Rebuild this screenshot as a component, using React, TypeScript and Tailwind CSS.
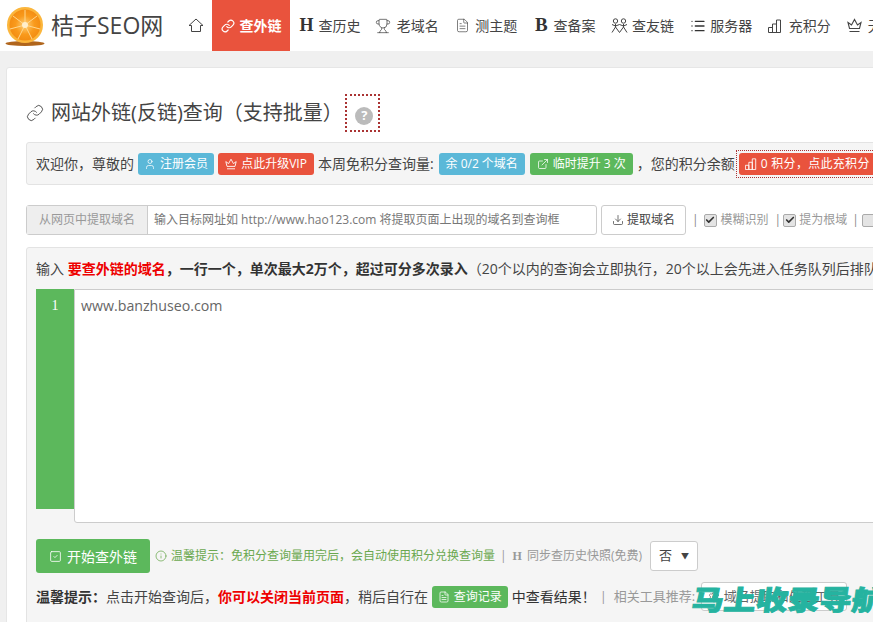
import React from "react";
import {
  Check,
  Download,
  ExternalLink,
  FileText,
  Info,
  Link,
  List,
  Settings,
  SquareCheck,
  Trophy,
  User,
} from "lucide-react";

const font = { fontFamily: '"Open Sans", "Noto Sans CJK SC", sans-serif' };

function Logo() {
  return (
    <svg width="40" height="44" viewBox="0 0 40 44" className="shrink-0">
      <defs>
        <radialGradient id="pulp" cx="0.5" cy="0.5" r="0.55">
          <stop offset="0" stopColor="#ffd27a" />
          <stop offset="0.55" stopColor="#f99a1c" />
          <stop offset="1" stopColor="#f28a10" />
        </radialGradient>
      </defs>
      <ellipse cx="20" cy="39.5" rx="19.5" ry="2.5" fill="#b0651c" />
      <circle cx="20" cy="21" r="18" fill="#fbb63c" />
      <circle cx="20" cy="21" r="15.5" fill="url(#pulp)" />
      <path d="M20 21 L8 12 M20 21 L20 6 M20 21 L32 12 M20 21 L35 25 M20 21 L27 35 M20 21 L13 35 M20 21 L5 25" stroke="#ffd78e" strokeWidth="1" />
      <circle cx="20" cy="21" r="3" fill="#ffeecb" />
    </svg>
  );
}

function HomeIcon() {
  return (
    <svg width="16" height="15" viewBox="0 0 16 15" fill="none" stroke="#444" strokeWidth="1">
      <path d="M1 7.5 L8 1 L15 7.5 H12.5 V13.5 H3.5 V7.5 H1 Z" />
    </svg>
  );
}

function CrownIcon({ size = 15, color = "#444" }: { size?: number; color?: string }) {
  return (
    <svg width={size} height={size} viewBox="0 0 15 15" fill="none" stroke={color} strokeWidth="1.1">
      <path d="M1 4.5 L4.5 7 L7.5 1.5 L10.5 7 L14 4.5 L12.5 10.5 H2.5 Z M2.5 13.5 H12.5" />
    </svg>
  );
}

function ChartIcon({ size = 14, color = "#444" }: { size?: number; color?: string }) {
  return (
    <svg width={size} height={size} viewBox="0 0 14 14" fill="none" stroke={color} strokeWidth="1">
      <path d="M0.5 13.5 V8.5 H4.5 V13.5 M4.5 13.5 V5 H8.5 V13.5 M8.5 13.5 V1 H12.5 V13.5 H0.5" />
    </svg>
  );
}

function Friends() {
  return (
    <svg width="17" height="16" viewBox="0 0 17 16" fill="none" stroke="#444" strokeWidth="1">
      <circle cx="4.5" cy="3" r="2.2" />
      <circle cx="12.5" cy="3" r="2.2" />
      <path d="M1 6.5 L4.5 8 L8.5 6.5 L12.5 8 L16 6.5 M4.5 6 V9 L1 14.5 M4.5 9 L8.5 14.5 L12.5 9 V6 M12.5 9 L16 14.5" />
    </svg>
  );
}

function NavItem({ icon, label, gap, width = "w-[78.4px]" }: { icon: React.ReactNode; label: string; gap: string; width?: string }) {
  return (
    <div className={`flex h-[51px] shrink-0 items-center justify-end pr-[8px] text-[14px] text-[#444] ${width} ${gap}`}>
      {icon}
      <span>{label}</span>
    </div>
  );
}

function Badge({ color, icon, extra, children }: { color: string; icon?: React.ReactNode; extra?: string; children: React.ReactNode }) {
  return (
    <span className={`flex h-[22px] shrink-0 items-center gap-[4px] whitespace-nowrap rounded-[3px] px-[6px] text-[12px] text-white ${color} ${extra ?? ""}`}>
      {icon}
      {children}
    </span>
  );
}

function Tick({ checked }: { checked: boolean }) {
  return (
    <span className="flex h-[13px] w-[13px] shrink-0 items-center justify-center rounded-[2px] border border-[#aaa] bg-[#e4e4e4]">
      {checked && <Check size={10} strokeWidth={4} className="text-[#333]" />}
    </span>
  );
}

export default function App() {
  return (
    <div className="relative h-[622px] w-[873px] overflow-hidden bg-[#f0f0f0]" style={font}>
      <div className="flex h-[51px] items-center bg-white">
        <div className="ml-[5px] flex w-[175px] shrink-0 items-center gap-[6px]">
          <Logo />
          <span className="text-[23px] leading-none text-[#444]">桔子SEO网</span>
        </div>
        <div className="flex h-[51px] w-[32px] shrink-0 items-center justify-center">
          <HomeIcon />
        </div>
        <div className="flex h-[51px] w-[78px] shrink-0 items-center justify-center gap-[5px] bg-[#e9533d] text-[14px] font-bold text-white">
          <Link size={14} strokeWidth={2} />
          查外链
        </div>
        <div className="flex">
          <NavItem gap="gap-[5px]" icon={<span className="text-[18px] font-bold text-[#333] [font-family:'Liberation_Serif']">H</span>} label="查历史" />
          <NavItem gap="gap-[6px]" icon={<Trophy size={16} strokeWidth={1} color="#333" />} label="老域名" />
          <NavItem gap="gap-[5px]" icon={<FileText size={15} strokeWidth={1} color="#333" />} label="测主题" />
          <NavItem gap="gap-[6px]" icon={<span className="text-[19px] font-bold text-[#333] [font-family:'Liberation_Serif']">B</span>} label="查备案" />
          <NavItem gap="gap-[4px]" icon={<Friends />} label="查友链" />
          <NavItem gap="gap-[4px]" icon={<List size={16} strokeWidth={2} color="#333" />} label="服务器" />
          <NavItem gap="gap-[7px]" icon={<ChartIcon />} label="充积分" />
          <NavItem gap="gap-[6px]" width="w-[51px]" icon={<CrownIcon />} label="无" />
        </div>
      </div>

      <div className="ml-[6px] mt-[16px] h-[600px] w-[1000px] rounded-t-[3px] border border-[#e6e6e6] bg-white pl-[19px] pt-[25px]">
        <div className="flex h-[40px] items-center text-[#444]">
          <Link size={18} strokeWidth={1.2} />
          <span className="ml-[7px] text-[20px]">网站外链(反链)查询（支持批量）</span>
          <div className="ml-[2px] flex h-[38px] w-[35px] items-center justify-center border-2 border-dotted border-[#a33] pl-[4px] pt-[5px]">
            <span className="flex h-[18px] w-[18px] items-center justify-center rounded-full bg-[#bbb] text-[13px] font-bold leading-none text-white">?</span>
          </div>
        </div>

        <div className="mt-[9px] flex h-[43px] items-center gap-[4px] rounded-[3px] border border-[#e3e3e3] bg-[#f5f5f5] pl-[9px] text-[14px] text-[#444]">
          <span>欢迎你，尊敬的</span>
          <Badge color="bg-[#5bb8d8]" icon={<User size={12} strokeWidth={1.5} />}>注册会员</Badge>
          <Badge color="bg-[#e9533d]" extra="w-[96px] justify-center" icon={<CrownIcon size={12} color="#fff" />}>点此升级VIP</Badge>
          <span>本周免积分查询量:</span>
          <Badge color="bg-[#5bb8d8]" extra="ml-[1px] w-[86px] justify-center">余 0/2 个域名</Badge>
          <Badge color="bg-[#5cb85c]" extra="ml-[1px] w-[103px] justify-center" icon={<ExternalLink size={12} strokeWidth={1.5} />}>临时提升 3 次</Badge>
          <span className="whitespace-nowrap">，您的积分余额</span>
          <span className="-ml-[3px] border border-dotted border-[#a33] p-[2px]">
            <Badge color="bg-[#e9533d]" extra="tracking-[0.3px]" icon={<ChartIcon size={12} color="#fff" />}>0 积分，点此充积分</Badge>
          </span>
        </div>

        <div className="mt-[20px] flex h-[30px] items-center text-[12px] text-[#999]">
          <div className="flex h-[30px] w-[571px] shrink-0 rounded-[3px] border border-[#ccc] bg-white">
            <span className="flex w-[121px] shrink-0 items-center justify-center border-r border-[#ccc] bg-[#eee]">从网页中提取域名</span>
            <span className="flex items-center pl-[6px] text-[#777]">输入目标网址如 http://www.hao123.com 将提取页面上出现的域名到查询框</span>
          </div>
          <div className="ml-[4px] flex h-[30px] w-[85px] shrink-0 items-center justify-center gap-[3px] rounded-[3px] border border-[#ccc] bg-white text-[#444]">
            <Download size={12} strokeWidth={1.5} />
            提取域名
          </div>
          <span className="ml-[6px] mr-[5px] text-[#888]">|</span>
          <Tick checked />
          <span className="ml-[4px]">模糊识别</span>
          <span className="ml-[6px] mr-[2px] text-[#888]">|</span>
          <Tick checked />
          <span className="ml-[3px]">提为根域</span>
          <span className="ml-[5px] mr-[3px] text-[#888]">|</span>
          <Tick checked={false} />
        </div>

        <div className="mt-[12px] h-[400px] rounded-[3px] border border-[#e3e3e3] bg-[#f5f5f5] pl-[9px] pt-[10px] text-[14px] text-[#444]">
          <div className="flex h-[20px] items-center whitespace-nowrap">
            <span>输入&nbsp;</span>
            <b className="text-[#e00]">要查外链的域名</b>
            <b className="text-[#333]">，一行一个，单次最大2万个，超过可分多次录入</b>
            <span>（20个以内的查询会立即执行，20个以上会先进入任务队列后排队</span>
          </div>

          <div className="mt-[11px] flex h-[234px] items-start">
            <div className="flex h-[220px] w-[38px] shrink-0 justify-center bg-[#5cb85c] pt-[7px] text-[14px] leading-[20px] text-white [font-family:'Liberation_Serif']">1</div>
            <div className="h-[234px] flex-1 rounded-b-[3px] border border-[#ccc] bg-white pl-[6px] pt-[6px] text-[14.2px] leading-[20px] text-[#666]">
              www.banzhuseo.com
            </div>
          </div>

          <div className="mt-[16px] flex h-[34px] items-center whitespace-nowrap text-[12px]">
            <div className="flex h-[34px] w-[114px] items-center justify-center gap-[5px] rounded-[3px] bg-[#5cb85c] text-[14px] text-white">
              <SquareCheck size={13} strokeWidth={1.5} />
              开始查外链
            </div>
            <Info size={12} strokeWidth={1.5} className="ml-[5px] text-[#6aa84f]" />
            <span className="ml-[4px] text-[#6aa84f]">温馨提示：免积分查询量用完后，会自动使用积分兑换查询量</span>
            <span className="ml-[5px] text-[#999]">|</span>
            <span className="ml-[6px] font-bold text-[#999] [font-family:'Liberation_Serif']">H</span>
            <span className="ml-[5px] text-[#999]">同步查历史快照(免费)</span>
            <div className="ml-[8px] flex h-[30px] w-[48px] items-center justify-center gap-[9px] rounded-[3px] border border-[#ccc] bg-white text-[13px] text-[#444]">
              否<span className="text-[8px]">▼</span>
            </div>
          </div>

          <div className="mt-[9px] flex h-[29px] items-center whitespace-nowrap">
            <b className="text-[#333]">温馨提示：</b>
            <span>点击开始查询后，</span>
            <b className="text-[#e00]">你可以关闭当前页面</b>
            <span>，稍后自行在&nbsp;</span>
            <Badge color="bg-[#5cb85c]" icon={<FileText size={12} strokeWidth={1.5} />}>查询记录</Badge>
            <span className="ml-[4px] text-[#333]">中查看结果！</span>
            <span className="ml-[4px] text-[13px] text-[#999]">|</span>
            <span className="ml-[7px] text-[13px] text-[#999]">相关工具推荐:</span>
            <div className="ml-[6px] flex h-[29px] w-[146px] items-center justify-center gap-[4px] rounded-[3px] border border-[#ccc] bg-white text-[13px] text-[#666]">
              <Settings size={12} strokeWidth={1.5} />
              域名提取和处理工具
            </div>
          </div>
        </div>
      </div>

      <div className="absolute left-[694px] top-[584px] origin-top-left -skew-x-6 scale-y-[0.85] whitespace-nowrap text-[32px] font-black leading-[36px] text-[#25b3a0] [-webkit-text-stroke:1px_#25b3a0]">
        马上收录导航
      </div>
    </div>
  );
}
